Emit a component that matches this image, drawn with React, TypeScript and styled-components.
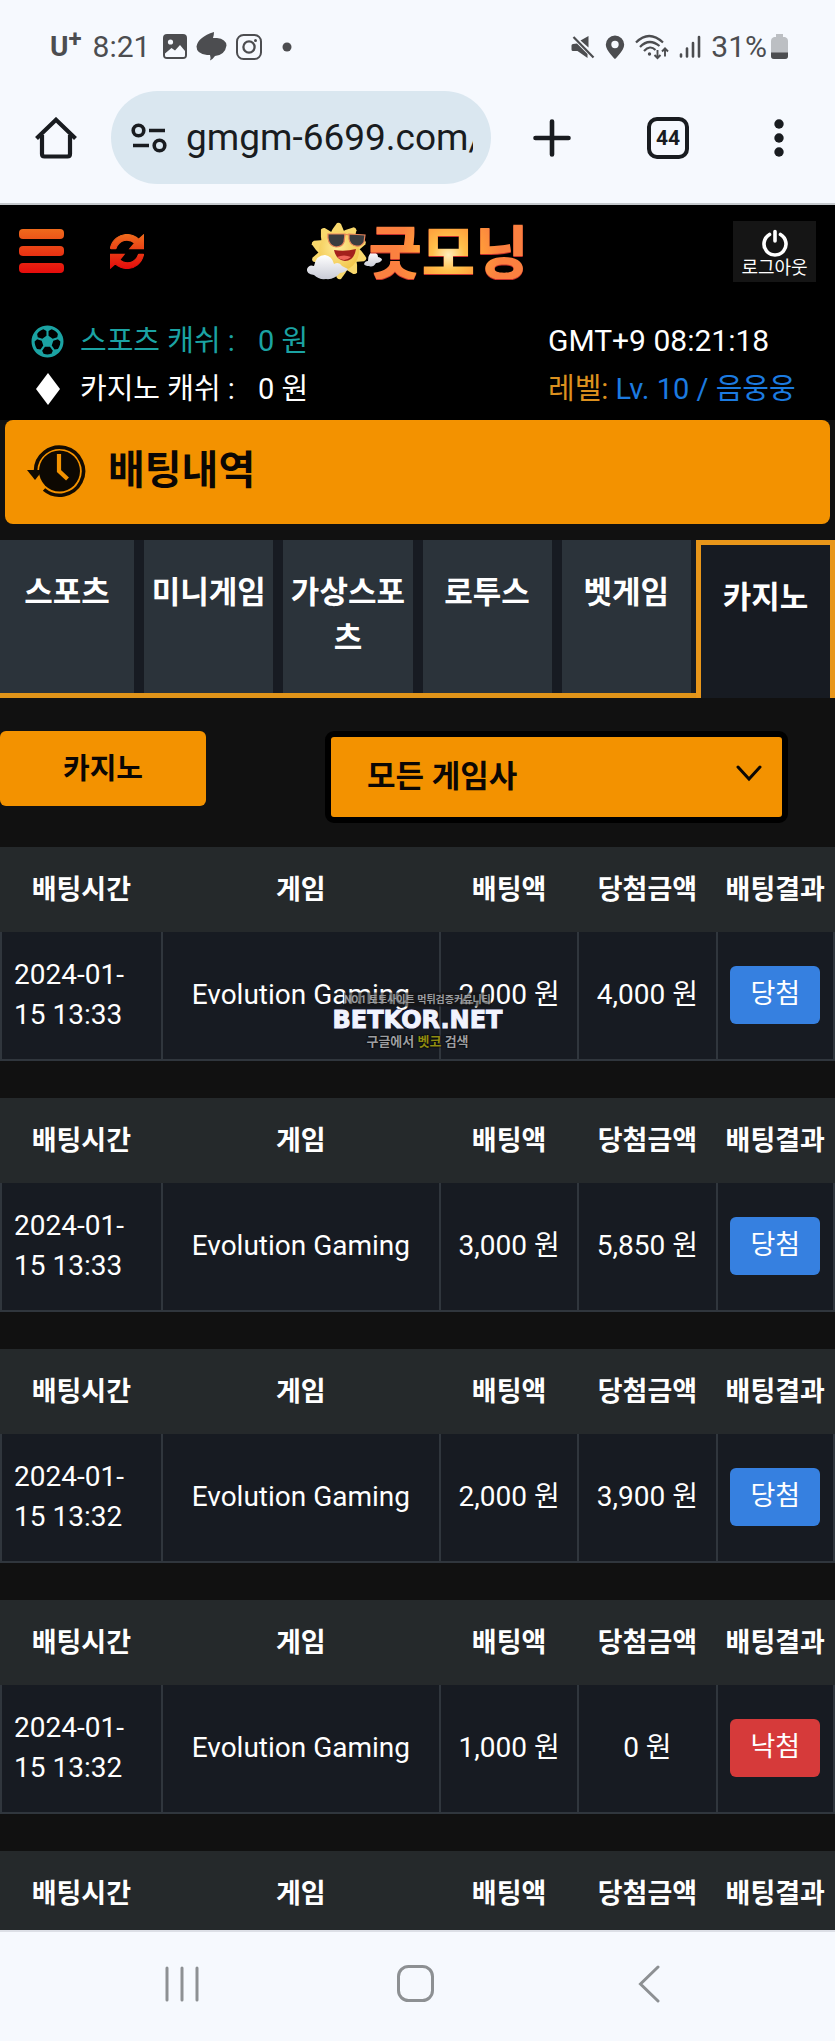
import React from "react";
import styled, { createGlobalStyle, css } from "styled-components";
import { FaRegFutbol } from "react-icons/fa";

const GlobalStyle = createGlobalStyle`
  *, *::before, *::after { box-sizing: border-box; }
  html, body { margin: 0; padding: 0; background: #111111; }
  body { font-family: Roboto, "Noto Sans CJK KR", sans-serif; color: #ffffff; }
  button, input, select { font: inherit; color: inherit; border: 0; margin: 0; padding: 0; background: none; }
  button { cursor: pointer; }
  svg { display: block; flex: none; }
`;

const Phone = styled.div`
  position: relative;
  display: flex;
  flex-direction: column;
  height: 100vh;
  overflow: hidden;
`;

const StatusBar = styled.div`
  flex: none;
  display: flex;
  justify-content: space-between;
  align-items: center;
  height: 91px;
  padding: 2px 47px 0 50px;
  background: #f6f9fe;
  color: #4c4d50;
  font-size: 30px;
  line-height: 36px;
`;

const StatusGroup = styled.div<{ $gap: number }>`
  display: flex;
  align-items: center;
  gap: ${(p) => p.$gap}px;
`;

const Carrier = styled.span`
  display: flex;
  align-items: center;
  font-weight: 700;
  font-size: 28px;
  margin-right: 2px;

  sup {
    font-size: 24px;
    line-height: 24px;
    margin-top: -16px;
  }
`;

const Clock = styled.span`
  margin-right: 4px;
`;

const Battery = styled.span`
  display: flex;
  align-items: center;
  gap: 4px;
`;

const BrowserBar = styled.div`
  flex: none;
  display: flex;
  align-items: flex-start;
  height: 114px;
  padding: 0 42px 0 35px;
  background: #f6f9fe;
  border-bottom: 2px solid #c5c9cd;
  color: #191c20;
`;

const BarButton = styled.button<{ $width: number }>`
  flex: none;
  display: flex;
  justify-content: center;
  align-items: center;
  width: ${(p) => p.$width}px;
  height: 93px;
`;

const BarActions = styled.div`
  flex: none;
  display: flex;
  gap: 76px;
`;

const AddressPill = styled.label`
  flex: 1;
  min-width: 0;
  display: flex;
  align-items: center;
  gap: 19px;
  height: 93px;
  margin: 0 42px 0 34px;
  padding: 0 18px 0 20px;
  border-radius: 47px;
  background: #dae7f0;

  input {
    flex: 1;
    min-width: 0;
    height: 48px;
    font-size: 37px;
    outline: 0;
  }
`;

const TabCount = styled.span`
  display: flex;
  justify-content: center;
  align-items: center;
  width: 42px;
  height: 42px;
  border: 4px solid #191c20;
  border-radius: 10px;
  font-size: 21px;
  font-weight: 700;
`;

const Site = styled.div`
  flex: 1;
  min-height: 0;
  overflow: hidden;
  background: #111111;
`;

const SiteHeader = styled.header`
  background: #000000;
  padding-bottom: 7px;
`;

const TopRow = styled.div`
  display: grid;
  grid-template-columns: 1fr auto 1fr;
  align-items: center;
  height: 94px;
  padding: 0 19px 2px;
`;

const TopTools = styled.div`
  display: flex;
  align-items: center;
  gap: 46px;
`;

const Brand = styled.a`
  display: flex;
  align-items: center;
  height: 60px;
  text-decoration: none;
`;

const BrandName = styled.span`
  margin: 0 0 5px -14px;
  font-family: "Noto Sans CJK KR", sans-serif;
  font-size: 58px;
  font-weight: 900;
  line-height: 60px;
  color: transparent;
  background: radial-gradient(circle at 50% 60%, #ffeebb 0, #ffc04a 16px, #ff9a3a 34px, #fb8040 52px);
  background-clip: text;
  -webkit-background-clip: text;
  filter: drop-shadow(0 1px 0 #c8302c);
`;

const Logout = styled.button`
  justify-self: end;
  display: flex;
  flex-direction: column;
  justify-content: center;
  align-items: center;
  width: 83px;
  height: 61px;
  padding-top: 5px;
  background: #151515;
  font-size: 18px;
  line-height: 22px;
`;

const Account = styled.div`
  display: grid;
  grid-template-columns: 1fr 287px;
  padding: 18px 0 0 31px;
  font-size: 29px;
  line-height: 48px;
  white-space: nowrap;
`;

const Cash = styled.div<{ $teal?: boolean }>`
  display: grid;
  grid-template-columns: 33px 128px auto 1fr;
  align-items: center;
  height: 48px;
  color: ${(p) => (p.$teal ? "#1ba3a3" : "#ffffff")};

  svg { justify-self: center; }
  span:first-of-type { margin-left: 16px; }
  span:last-of-type { margin-left: 66px; }
`;

const ServerTime = styled.time`
  font-size: 30px;
`;

const Level = styled.div`
  color: #1c7be0;

  b {
    font-weight: 400;
    color: #dc911f;
  }
`;

const PageTitle = styled.div`
  display: flex;
  align-items: center;
  gap: 22px;
  height: 104px;
  margin: 0 5px 16px;
  padding: 0 22px 2px;
  border-radius: 8px;
  background: #f39200;
  color: #0b0704;

  h1 {
    margin: 0;
    font-size: 40px;
    line-height: 56px;
    font-weight: 700;
  }
`;

const Tabs = styled.nav`
  display: grid;
  grid-template-columns: repeat(6, minmax(0, 1fr));
  height: 158px;
`;

const TabCell = styled.div<{ $active?: boolean }>`
  display: flex;
  padding: 0 5px;
  background: #171b22;
  border-bottom: 5px solid #e09419;

  &:first-child { padding-left: 0; }

  ${(p) =>
    p.$active &&
    css`
      padding: 0;
      border: 5px solid #e8961a;
      border-bottom: 0;
    `}
`;

const Tab = styled.button<{ $active?: boolean }>`
  flex: 1;
  display: flex;
  justify-content: center;
  align-items: flex-start;
  min-width: 0;
  padding: 30px 5px 0;
  background: ${(p) => (p.$active ? "#171b22" : "#2b333a")};
  font-size: 31px;
  font-weight: 700;
  line-height: 46px;
  text-align: center;
`;

const Filters = styled.div`
  display: flex;
  align-items: flex-start;
  gap: 119px;
  padding: 33px 47px 24px 0;
  color: #0b0704;
  font-weight: 700;
`;

const FilterButton = styled.button`
  flex: none;
  width: 206px;
  height: 75px;
  padding-bottom: 6px;
  border-radius: 6px;
  background: #f39200;
  font-size: 29px;
`;

const SelectBox = styled.div`
  position: relative;
  flex: 1;

  select {
    display: block;
    width: 100%;
    height: 92px;
    padding: 0 48px 2px 36px;
    border: 6px solid #000000;
    border-radius: 9px;
    background: #f39200;
    font-size: 31px;
    appearance: none;
    outline: 0;
  }

  svg {
    position: absolute;
    right: 26px;
    top: 34px;
    pointer-events: none;
  }
`;

const BetTable = styled.table`
  width: 100%;
  margin-bottom: 37px;
  table-layout: fixed;
  border-collapse: collapse;
  font-size: 28px;
  line-height: 40px;

  th {
    height: 85px;
    padding: 0;
    background: #25292b;
    border: solid #25292b;
    border-width: 0 2px;
    font-size: 27px;
    font-weight: 700;
    white-space: nowrap;
  }

  td {
    height: 128px;
    padding: 0 12px 2px;
    background: #171b22;
    border: 2px solid #30363d;
    border-top: 0;
    text-align: center;
  }

  td:first-child { text-align: left; }
  td + td { padding: 0 0 2px; }
`;

const Result = styled.button<{ $win: boolean }>`
  width: 90px;
  height: 58px;
  padding-bottom: 2px;
  border-radius: 6px;
  background: ${(p) => (p.$win ? "#3680e0" : "#d63a3a")};
  font-size: 27px;
  vertical-align: middle;
`;

const SystemNav = styled.nav`
  flex: none;
  display: flex;
  height: 111px;
  padding: 0 69px 6px 65px;
  background: #f6f9fe;
  border-top: 2px solid #dcdfe6;
  color: #8d9093;

  button {
    flex: 1;
    display: flex;
    justify-content: center;
    align-items: center;
  }
`;

const Watermark = styled.div`
  position: absolute;
  top: 50%;
  left: 50%;
  transform: translate(-50%, -50%);
  display: flex;
  flex-direction: column;
  align-items: center;
  white-space: nowrap;
  pointer-events: none;
  font-weight: 700;
  color: #9c9ea1;
`;

const MarkNote = styled.span`
  font-size: 10px;
  line-height: 14px;
  background: rgba(20, 20, 20, 0.6);
`;

const MarkName = styled.span`
  font-family: "DejaVu Sans", sans-serif;
  font-size: 24px;
  line-height: 27px;
  color: #f2f3fd;
  -webkit-text-stroke: 1px #f2f3fd;
  text-shadow: 1px 1px 0 #0d0f3d, -1px -1px 0 #0d0f3d;
`;

const MarkHint = styled.span`
  font-size: 13px;
  line-height: 16px;
  text-shadow: 0 0 2px #000000, 0 0 2px #000000;

  em {
    font-style: normal;
    color: #8f8c12;
  }
`;

const tabs = ["스포츠", "미니게임", "가상스포츠", "로투스", "벳게임", "카지노"];

const columns = [
  { label: "배팅시간", width: "19.3%" },
  { label: "게임", width: "33.4%" },
  { label: "배팅액", width: "16.6%" },
  { label: "당첨금액", width: "16.6%" },
  { label: "배팅결과", width: "14.1%" },
];

type Bet = { time: string; game: string; stake: string; payout: string; win: boolean };

const bets: Bet[] = [
  { time: "2024-01-15 13:33", game: "Evolution Gaming", stake: "2,000 원", payout: "4,000 원", win: true },
  { time: "2024-01-15 13:33", game: "Evolution Gaming", stake: "3,000 원", payout: "5,850 원", win: true },
  { time: "2024-01-15 13:32", game: "Evolution Gaming", stake: "2,000 원", payout: "3,900 원", win: true },
  { time: "2024-01-15 13:32", game: "Evolution Gaming", stake: "1,000 원", payout: "0 원", win: false },
];

function WarmGradient({ id }: { id: string }) {
  return (
    <defs>
      <linearGradient id={id} x1="0" y1="0" x2="0" y2="1">
        <stop offset="0" stopColor="#ee6a1c" />
        <stop offset="1" stopColor="#e60c0c" />
      </linearGradient>
    </defs>
  );
}

function PictureIcon() {
  return (
    <svg width="24" height="25" viewBox="0 0 24 25">
      <rect width="24" height="25" rx="4" fill="currentColor" />
      <circle cx="7.5" cy="8" r="2.6" fill="#f6f9fe" />
      <path d="M2 19.5 8.5 14l3.5 2.5 5-5.5 5 6v4.500q0 1.500-1.500 1.500h-17Q2 23 2 21.500Z" fill="#f6f9fe" />
    </svg>
  );
}

function LeafIcon() {
  return (
    <svg width="31" height="29" viewBox="0 0 31 29" fill="currentColor">
      <path d="M18 0q0 3-1 6h4q9 1 9.500 7.500Q29 23 19 24q-2 3-5 4.500 1-3 0-5.500h-3Q.5 22 .5 14.500 2 5 18 0Z" />
    </svg>
  );
}

function CameraIcon() {
  return (
    <svg width="26" height="26" viewBox="0 0 26 26" fill="none" stroke="currentColor" strokeWidth="2">
      <rect x="1" y="1" width="24" height="24" rx="6.500" />
      <circle cx="13" cy="13" r="5.600" strokeWidth="2.300" />
      <circle cx="19.500" cy="6.500" r="1.500" fill="currentColor" stroke="none" />
    </svg>
  );
}

function MuteIcon() {
  return (
    <svg width="24" height="24" viewBox="0 0 24 24" fill="currentColor">
      <path d="M2 9q-1.500 0-1.500 1.500v4Q.5 16 2 16h4.500l10 7V19L6 8.500Z M17.500 1v11.500L9.500 5.500Z" />
      <path d="M2.500 2 22.500 22.500" stroke="currentColor" strokeWidth="2.200" />
    </svg>
  );
}

function PinIcon() {
  return (
    <svg width="20" height="24" viewBox="0 0 20 24" fill="currentColor" fillRule="evenodd">
      <path d="M10 .5a9.200 9.200 0 0 1 9.200 9.200C19.200 15.500 10 24 10 24S.8 15.500.8 9.700A9.200 9.200 0 0 1 10 .5Zm0 5.300a3.700 3.700 0 1 0 0 7.400 3.700 3.700 0 0 0 0-7.400Z" />
    </svg>
  );
}

function WifiIcon() {
  return (
    <svg width="34" height="26" viewBox="0 0 34 26" fill="none" stroke="currentColor" strokeWidth="2.200">
      <path d="M1 8.500Q14-4.500 28 8.500M5 13Q14 3.500 24.500 12M9 17q6-6.500 11.500-1" />
      <circle cx="14.500" cy="20" r="1.700" fill="currentColor" stroke="none" />
      <path d="M22.500 16v8m-3-3 3 3.200 3-3.200M30 22.500v-8m-3 3 3-3.200 3 3.200" strokeWidth="1.900" />
    </svg>
  );
}

function SignalIcon() {
  return (
    <svg width="22" height="24" viewBox="0 0 22 24" stroke="currentColor" strokeWidth="2.600" strokeLinecap="round">
      <path d="M2 19.500v2M8 13.500v8M14 8v13.500M20 2v19.500" />
    </svg>
  );
}

function BatteryIcon() {
  return (
    <svg width="17" height="25" viewBox="0 0 17 25">
      <path d="M5 0h7v3h2q3 1 3 4v15q0 3-3 3H3q-3 0-3-3V7q0-3 3-4h2Z" fill="#bcbfc3" />
      <path d="M0 18.500h17V22q0 3-3 3H3q-3 0-3-3Z" fill="currentColor" />
    </svg>
  );
}

function HomeIcon() {
  return (
    <svg width="42" height="42" viewBox="0 0 42 42" fill="none" stroke="currentColor" strokeWidth="4.200">
      <path d="M7 18v19q0 2.500 2.500 2.500h23Q35 39.500 35 37V18" />
      <path d="M1.500 21.500 21 2.800l19.500 18.700" />
    </svg>
  );
}

function TuneIcon() {
  return (
    <svg width="36" height="30" viewBox="0 0 36 30" fill="none" stroke="currentColor" strokeWidth="3.600">
      <circle cx="7.500" cy="7.500" r="5.300" />
      <path d="M18 7.500h16M2 22.500h16" />
      <circle cx="28.500" cy="22.500" r="5.300" />
    </svg>
  );
}

function SunIcon() {
  const rays = Array.from({ length: 10 }, (_, i) => i * 36);
  return (
    <svg width="76" height="58" viewBox="0 0 76 58">
      <defs>
        <radialGradient id="sun" cx="0.45" cy="0.4" r="0.6">
          <stop offset="0" stopColor="#ffec9a" />
          <stop offset="1" stopColor="#f2c64c" />
        </radialGradient>
        <linearGradient id="cloud" x1="0" y1="0" x2="0" y2="1">
          <stop offset="0" stopColor="#ffffff" />
          <stop offset="1" stopColor="#c9cbd6" />
        </linearGradient>
      </defs>
      <g fill="#f8d86c">
        {rays.map((angle) => (
          <path key={angle} d="M23 14Q26 7 31 1q2-1 4 1l5 12Z" transform={`rotate(${angle} 33 29)`} />
        ))}
      </g>
      <circle cx="33" cy="29" r="20" fill="url(#sun)" />
      <path d="M28 28q11 2 22-1-2 12-11 12-9-1-11-11Z" fill="#a3201c" />
      <path d="M31 35q7-3 14 0-7 6-14 0Z" fill="#f0655a" />
      <g fill="#3a3c3f" stroke="#e8845a" strokeWidth="1.200">
        <path d="M22 12h17l-1 8q-2 5-8 5-7-1-8-9Z" />
        <path d="M43 12l16 1-1 7q-3 5-8 4-6-1-7-7Z" />
        <path d="M38 13q3-1 5 0" fill="none" />
      </g>
      <path d="M8 53q-8-1-7-6 2-5 7-3 2-11 11-11 7 1 9 9 5-3 8 2l6 3q-2 3-8 4-6 7-14 6-7 1-12-4Z" fill="url(#cloud)" />
      <path d="M58 42q1-3 4-3 0-8 5-9 5 1 5 5 4 1 4 3-2 3-6 3-3 5-7 3-4 0-5-2Z" fill="url(#cloud)" />
    </svg>
  );
}

function HistoryIcon() {
  return (
    <svg width="59" height="54" viewBox="0 0 59 54" fill="none">
      <path d="M8.500 27A24 24 0 1 1 17 45.500" stroke="#120b02" strokeWidth="3.600" />
      <path d="M0 26h16l-8 10Z" fill="#120b02" />
      <circle cx="32.500" cy="27" r="20.500" fill="#0d0802" />
      <path d="M32 10v17l8.500 8" stroke="#f39200" strokeWidth="4.200" />
    </svg>
  );
}

export default function App() {
  return (
    <>
      <GlobalStyle />
      <Phone>
        <StatusBar>
          <StatusGroup $gap={9}>
            <Carrier>
              U<sup>+</sup>
            </Carrier>
            <Clock>8:21</Clock>
            <PictureIcon />
            <LeafIcon />
            <CameraIcon />
            <svg width="40" height="10" viewBox="0 0 40 10" fill="currentColor">
              <circle cx="16" cy="5" r="4.500" />
            </svg>
          </StatusGroup>
          <StatusGroup $gap={10}>
            <MuteIcon />
            <PinIcon />
            <WifiIcon />
            <SignalIcon />
            <Battery>
              31%
              <BatteryIcon />
            </Battery>
          </StatusGroup>
        </StatusBar>

        <BrowserBar>
          <BarButton $width={42} aria-label="홈">
            <HomeIcon />
          </BarButton>
          <AddressPill>
            <TuneIcon />
            <input type="text" aria-label="주소" defaultValue="gmgm-6699.com/" />
          </AddressPill>
          <BarActions>
            <BarButton $width={38} aria-label="새 탭">
              <svg width="38" height="38" viewBox="0 0 38 38" stroke="currentColor" strokeWidth="4.600" strokeLinecap="round">
                <path d="M19 2.500v33M2.500 19h33" />
              </svg>
            </BarButton>
            <BarButton $width={42} aria-label="탭 목록">
              <TabCount>44</TabCount>
            </BarButton>
            <BarButton $width={28} aria-label="메뉴">
              <svg width="10" height="38" viewBox="0 0 10 38" fill="currentColor">
                <circle cx="5" cy="5" r="4.700" />
                <circle cx="5" cy="19" r="4.700" />
                <circle cx="5" cy="33" r="4.700" />
              </svg>
            </BarButton>
          </BarActions>
        </BrowserBar>

        <Site>
          <SiteHeader>
            <TopRow>
              <TopTools>
                <button aria-label="전체 메뉴">
                  <svg width="45" height="44" viewBox="0 0 45 44">
                    <defs>
                      <linearGradient id="bars" gradientUnits="userSpaceOnUse" x1="0" y1="0" x2="0" y2="44">
                        <stop offset="0" stopColor="#ee6a1c" />
                        <stop offset="1" stopColor="#e60c0c" />
                      </linearGradient>
                    </defs>
                    <g fill="url(#bars)">
                      <rect width="45" height="10" rx="4" />
                      <rect y="17" width="45" height="10" rx="4" />
                      <rect y="34" width="45" height="10" rx="4" />
                    </g>
                  </svg>
                </button>
                <button aria-label="새로고침">
                  <svg width="34" height="35" viewBox="0 0 1536 1536">
                    <WarmGradient id="spin" />
                    <path
                      fill="url(#spin)"
                      stroke="url(#spin)"
                      strokeWidth="50"
                      d="M1511 928q0 5-1 7-64 268-268 434.500T764 1536q-146 0-282.500-55T238 1324L0 1536V896h640L439 1142q71 66 161 102t187 36q134 0 250-65t186-179q11-17 53-117 8-23 30-23h192q13 0 22.500 9.500t9.500 22.500zM1536 0v640H896l215-247Q969 256 768 256q-134 0-250 65T332 500q-11 17-53 117-8 23-30 23H50q-13 0-22.500-9.500T18 608v-7q65-268 270-434.500T768 0q146 0 284 55.500T1297 212z"
                    />
                  </svg>
                </button>
              </TopTools>
              <Brand href="#">
                <SunIcon />
                <BrandName>굿모닝</BrandName>
              </Brand>
              <Logout>
                <svg width="28" height="28" viewBox="0 0 28 28" fill="none" stroke="#ffffff" strokeWidth="3.600" strokeLinecap="round">
                  <path d="M8.500 5.500a11 11 0 1 0 11 0M14 2.500v9.500" />
                </svg>
                로그아웃
              </Logout>
            </TopRow>
            <Account>
              <Cash $teal>
                <FaRegFutbol size={33} />
                <span>스포츠 캐쉬 :</span>
                <span>0 원</span>
              </Cash>
              <ServerTime>GMT+9 08:21:18</ServerTime>
              <Cash>
                <svg width="24" height="32" viewBox="0 0 24 32" fill="#ffffff">
                  <path d="M12 0 24 16 12 32 0 16Z" />
                </svg>
                <span>카지노 캐쉬 :</span>
                <span>0 원</span>
              </Cash>
              <Level>
                <b>레벨:</b> Lv. 10 / 음웅웅
              </Level>
            </Account>
          </SiteHeader>

          <PageTitle>
            <HistoryIcon />
            <h1>배팅내역</h1>
          </PageTitle>

          <Tabs>
            {tabs.map((name) => {
              const active = name === "카지노";
              return (
                <TabCell key={name} $active={active}>
                  <Tab $active={active}>{name}</Tab>
                </TabCell>
              );
            })}
          </Tabs>

          <Filters>
            <FilterButton>카지노</FilterButton>
            <SelectBox>
              <select aria-label="게임사" defaultValue="all">
                <option value="all">모든 게임사</option>
              </select>
              <svg width="26" height="17" viewBox="0 0 26 17" fill="none" stroke="#0b0704" strokeWidth="3" strokeLinecap="round">
                <path d="M2 2 13 14 24 2" />
              </svg>
            </SelectBox>
          </Filters>

          {[...bets, null].map((bet, index) => (
            <BetTable key={index}>
              <colgroup>
                {columns.map((column) => (
                  <col key={column.label} style={{ width: column.width }} />
                ))}
              </colgroup>
              <thead>
                <tr>
                  {columns.map((column) => (
                    <th key={column.label} scope="col">
                      {column.label}
                    </th>
                  ))}
                </tr>
              </thead>
              {bet && (
                <tbody>
                  <tr>
                    <td>{bet.time}</td>
                    <td>{bet.game}</td>
                    <td>{bet.stake}</td>
                    <td>{bet.payout}</td>
                    <td>
                      <Result $win={bet.win}>{bet.win ? "당첨" : "낙첨"}</Result>
                    </td>
                  </tr>
                </tbody>
              )}
            </BetTable>
          ))}
        </Site>

        <SystemNav>
          <button aria-label="최근 앱">
            <svg width="34" height="36" viewBox="0 0 34 36" stroke="currentColor" strokeWidth="3" strokeLinecap="round">
              <path d="M2 2v32M17 2v32M32 2v32" />
            </svg>
          </button>
          <button aria-label="홈 화면">
            <svg width="37" height="37" viewBox="0 0 37 37" fill="none" stroke="currentColor" strokeWidth="3">
              <rect x="1.500" y="1.500" width="34" height="34" rx="10" />
            </svg>
          </button>
          <button aria-label="뒤로">
            <svg width="22" height="38" viewBox="0 0 22 38" fill="none" stroke="currentColor" strokeWidth="3" strokeLinecap="round">
              <path d="M20 2 2.500 19 20 36" />
            </svg>
          </button>
        </SystemNav>

        <Watermark>
          <MarkNote>NO.1 토토사이트 먹튀검증커뮤니티</MarkNote>
          <MarkName>BETKOR.NET</MarkName>
          <MarkHint>
            구글에서 <em>벳코</em> 검색
          </MarkHint>
        </Watermark>
      </Phone>
    </>
  );
}
